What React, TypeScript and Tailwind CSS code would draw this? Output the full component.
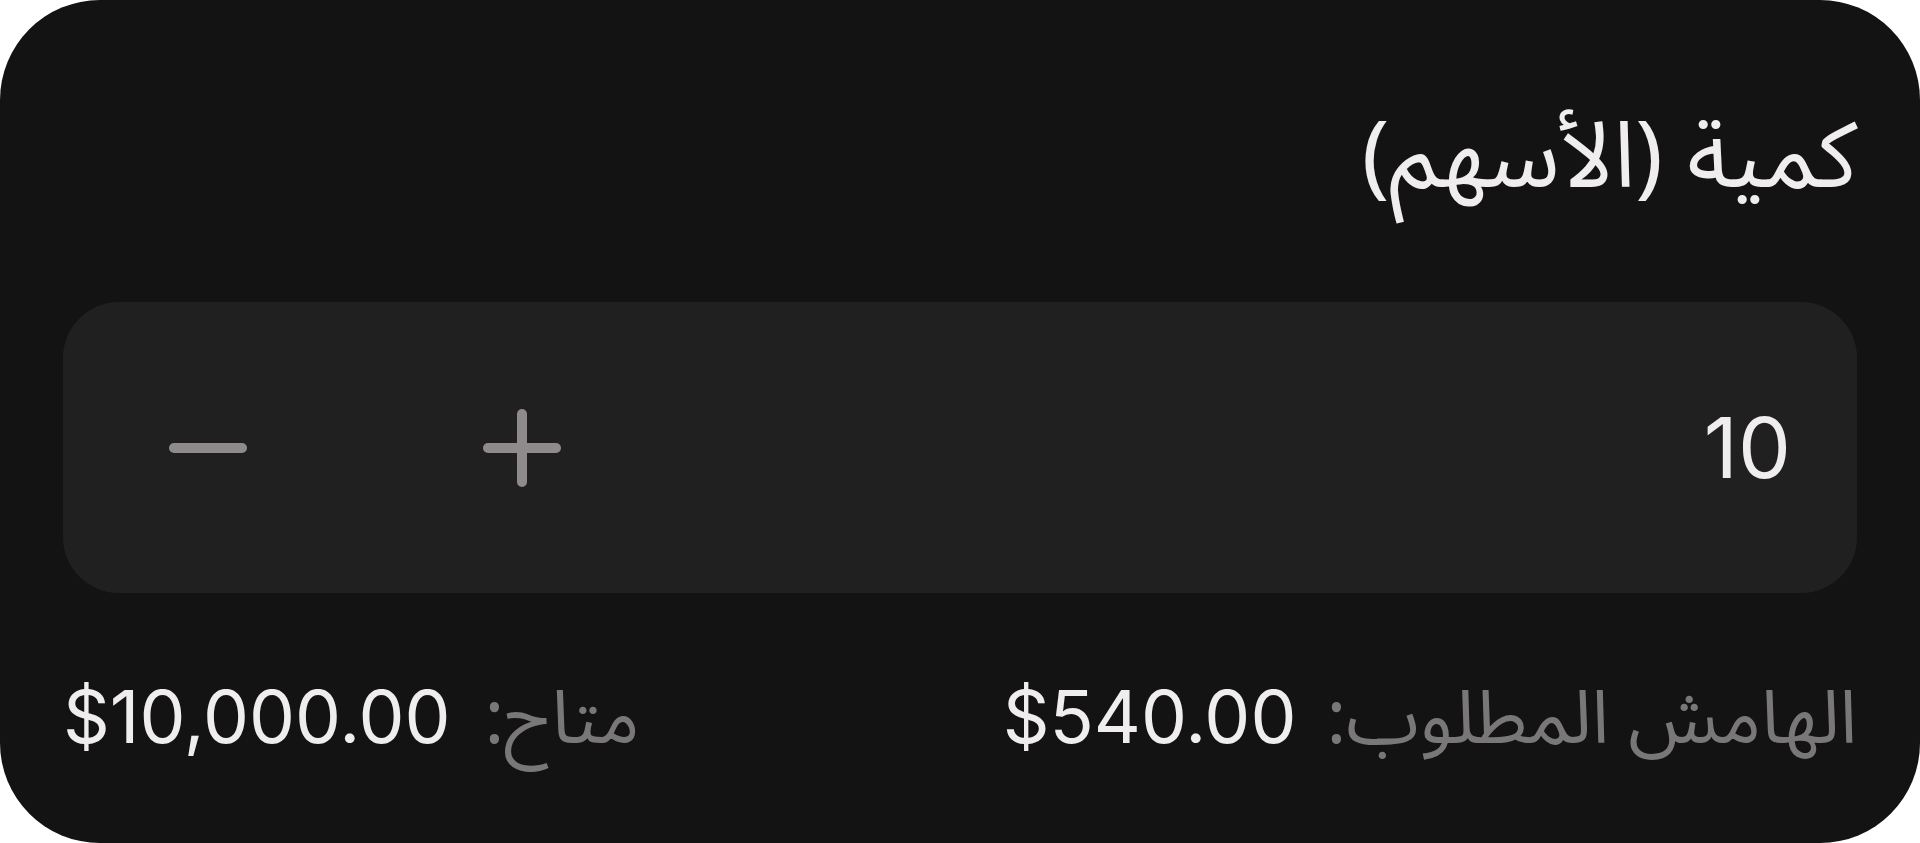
import React, { useState } from 'react';

const arabic = { fontFamily: '"Noto Sans Arabic", "Noto Sans", "DejaVu Sans", sans-serif' };
const latin = { fontFamily: 'Inter, "Noto Sans", sans-serif' };

function StepIcon({ plus }: { plus?: boolean }) {
    return (
        <svg width="80" height="80" viewBox="0 0 80 80" fill="none" stroke="#8f8b8d" strokeWidth="10" strokeLinecap="round">
            <path d="M6 40h68" />
            {plus && <path d="M40 6v68" />}
        </svg>
    );
}

export default function App() {
    const [qty, setQty] = useState(10);

    return (
        <div className="bg-white w-full h-screen">
            <div dir="rtl" className="w-full h-full rounded-[100px] bg-[#141314] px-[63px] pt-[98px] flex flex-col">
                <h1 className="text-[92px] leading-[120px] text-[#efeded] font-normal" style={arabic}>
                    كمية (الأسهم)
                </h1>
                <div className="mt-[84px] h-[291px] rounded-[56px] bg-[#212021] flex items-center justify-between pr-[66px] pl-[105px]">
                    <span className="text-[84px] text-[#efeded] leading-none" style={latin}>{qty}</span>
                    <div className="flex items-center gap-[234px]" dir="ltr">
                        <button onClick={() => setQty(Math.max(0, qty - 1))}>
                            <StepIcon />
                        </button>
                        <button onClick={() => setQty(qty + 1)}>
                            <StepIcon plus />
                        </button>
                    </div>
                </div>
                <div className="mt-[87px] flex items-center justify-between leading-none">
                    <div className="flex items-baseline gap-[30px]">
                        <span className="text-[74px] text-[#7a7778]" style={arabic}>الهامش المطلوب:</span>
                        <span dir="ltr" className="text-[73px] text-[#efeded]" style={latin}>$540.00</span>
                    </div>
                    <div className="flex items-baseline gap-[34px]">
                        <span className="text-[74px] text-[#7a7778]" style={arabic}>متاح:</span>
                        <span dir="ltr" className="text-[73px] text-[#efeded]" style={latin}>$10,000.00</span>
                    </div>
                </div>
            </div>
        </div>
    );
}
